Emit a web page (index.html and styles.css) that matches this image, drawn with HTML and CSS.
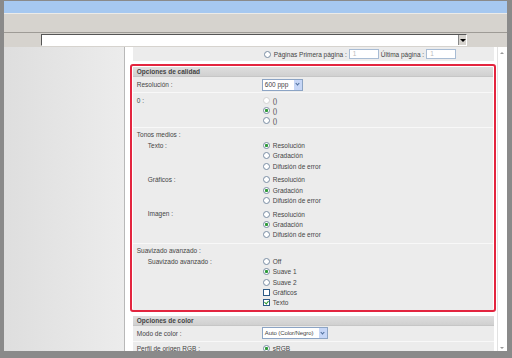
FILE: index.html
```html
<!DOCTYPE html>
<html lang="es">
<head>
	<meta charset="UTF-8">
	<title>Opciones de calidad</title>
	<link rel="stylesheet" href="styles.css">
</head>
<body>
	<div class="frame">
		<div class="title"></div>
		<div class="band"></div>
		<div class="tool">
			<div class="combo"><span class="combo-btn"></span></div>
		</div>
		<div class="main">
			<div class="side"></div>
			<div class="pane">
				<div class="pages">
					<span class="radio"></span><span>Páginas Primera página :</span><span class="num">1</span><span>Última página :</span><span class="num">1</span>
				</div>
				<div class="box">
					<div class="head">Opciones de calidad</div>
					<div class="row tall">
						<div class="lbl">Resolución :</div>
						<div class="val"><span class="select w41">600 ppp<span class="arrow"></span></span></div>
					</div>
					<div class="row list">
						<div class="lbl">0 :</div>
						<div class="val">
							<div class="opt"><span class="radio off"></span>()</div>
							<div class="opt"><span class="radio on"></span>()</div>
							<div class="opt"><span class="radio"></span>()</div>
						</div>
					</div>
					<div class="group">
						<div class="glbl">Tonos medios :</div>
						<div class="row sub">
							<div class="lbl">Texto :</div>
							<div class="val">
								<div class="opt"><span class="radio on"></span>Resolución</div>
								<div class="opt"><span class="radio"></span>Gradación</div>
								<div class="opt"><span class="radio"></span>Difusión de error</div>
							</div>
						</div>
						<div class="row sub">
							<div class="lbl">Gráficos :</div>
							<div class="val">
								<div class="opt"><span class="radio"></span>Resolución</div>
								<div class="opt"><span class="radio on"></span>Gradación</div>
								<div class="opt"><span class="radio"></span>Difusión de error</div>
							</div>
						</div>
						<div class="row sub">
							<div class="lbl">Imagen :</div>
							<div class="val">
								<div class="opt"><span class="radio"></span>Resolución</div>
								<div class="opt"><span class="radio on"></span>Gradación</div>
								<div class="opt"><span class="radio"></span>Difusión de error</div>
							</div>
						</div>
					</div>
					<div class="group last">
						<div class="glbl">Suavizado avanzado :</div>
						<div class="row sub">
							<div class="lbl">Suavizado avanzado :</div>
							<div class="val">
								<div class="opt"><span class="radio"></span>Off</div>
								<div class="opt"><span class="radio on"></span>Suave 1</div>
								<div class="opt"><span class="radio"></span>Suave 2</div>
								<div class="opt"><span class="check"></span>Gráficos</div>
								<div class="opt"><span class="check on"></span>Texto</div>
							</div>
						</div>
					</div>
				</div>
				<div class="after">
					<div class="head">Opciones de color</div>
					<div class="row tall">
						<div class="lbl">Modo de color :</div>
						<div class="val"><span class="select w66">Auto (Color/Negro)<span class="arrow"></span></span></div>
					</div>
					<div class="row last-row">
						<div class="lbl">Perfil de origen RGB :</div>
						<div class="val"><div class="opt"><span class="radio on"></span>sRGB</div></div>
					</div>
				</div>
			</div>
			<div class="scroll">
				<span class="up"></span>
				<span class="down"></span>
			</div>
		</div>
	</div>
</body>
</html>
```
FILE: styles.css
```css
body{margin: 0;background: #8a8a8a;font-family: "Liberation Sans", Arial, sans-serif;font-size: 6.5px;color: #444;}
.frame{width: 512px;height: 358px;box-sizing: border-box;border-style: solid;border-color: #8a8a8a;border-width: 1px 5px 7px 4px;background: #d6d3ce;overflow: hidden;}
.title{height: 12px;background: #a6c8f0;}
.band{height: 18px;border-top: 1px solid #ecebe8;border-bottom: 1px solid #9e9b96;background: #d6d3ce;}
.tool{height: 14px;padding-top: 1px;box-sizing: border-box;}
.combo{width: 426px;height: 12px;margin-left: 37px;box-sizing: border-box;background: #fff;border: 1px solid #fff;border-top-color: #555;border-left-color: #555;position: relative;}
.combo-btn{position: absolute;right: 0;top: 0;width: 8px;height: 10px;background: #d6d3ce;border-left: 1px solid #888;box-sizing: border-box;}
.combo-btn:after{content: "";position: absolute;left: 1px;top: 4px;border-left: 3px solid transparent;border-right: 3px solid transparent;border-top: 3px solid #000;}

.main{display: flex;height: 304px;}
.side{width: 120px;border-right: 1px solid #b8b8b8;background: linear-gradient(to right, #dedede, #ececec);}
.pane{width: 373px;background: #fff;overflow: hidden;}
.scroll{width: 9px;border-left: 1px solid #e2e2e2;background: #fff;position: relative;}
.scroll .up{position: absolute;left: 2px;top: 5px;border-left: 2px solid transparent;border-right: 2px solid transparent;border-bottom: 2px solid #999;}
.scroll .down{position: absolute;left: 2px;bottom: 2px;border-left: 2px solid transparent;border-right: 2px solid transparent;border-top: 2px solid #999;}

.pages{height: 14px;margin-left: 8px;width: 361px;background: #ececec;display: flex;align-items: center;padding-left: 130px;box-sizing: border-box;white-space: nowrap;}
.pages .radio{margin-right: 3px;}
.num{width: 30px;height: 10px;box-sizing: border-box;border: 1px solid #a8bcd4;background: #fff;color: #bbb;padding-left: 3px;line-height: 8px;margin: 0 2px 0 2px;}

.box{margin: 3px 1px 0 5px;border: 2px solid #e3253f;border-radius: 3px;padding: 1px 1px 0 1px;background: #fff;}
.head{height: 10px;line-height: 10px;padding-left: 4px;font-weight: bold;background: linear-gradient(#dedede, #d0d0d0);border-bottom: 1px solid #c6c6c6;box-sizing: border-box;}
.row{display: flex;background: #ececec;border-bottom: 1px solid #f8f8f8;}
.lbl{width: 129px;padding-left: 4px;box-sizing: border-box;flex-shrink: 0;white-space: nowrap;}
.val{flex: 1;}
.tall{height: 16px;align-items: center;box-sizing: border-box;}
.list{padding: 2px 0 1.5px 0;}
.list .lbl{line-height: 10.25px;padding-top: 1px;}
.group{background: #ececec;border-bottom: 1px solid #f8f8f8;}
.group.last{border-bottom: 0;padding-bottom: 2px;}
.glbl{height: 10.25px;line-height: 10.25px;padding: 2px 0 0 4px;}
.sub{border-bottom: 0;padding-bottom: 3.5px;}
.sub .lbl{padding-left: 15px;line-height: 10.25px;}
.group.last .sub{padding-bottom: 0;}
.opt{height: 10.25px;display: flex;align-items: center;white-space: nowrap;}
.last-row{height: 12px;padding-top: 1px;align-items: center;}

.radio{display: inline-block;width: 7px;height: 7px;box-sizing: border-box;border: 1px solid #7a8da3;border-radius: 50%;background: #fff;margin: 0 3px 0 1px;flex-shrink: 0;}
.radio.on{background: radial-gradient(circle, #2f9a3a 1.3px, #fff 1.9px);}
.radio.off{border-color: #d2d2d2;}
.check{display: inline-block;width: 7px;height: 7px;box-sizing: border-box;border: 1px solid #2c5a86;background: #fff;margin: 0 3px 0 1px;position: relative;flex-shrink: 0;}
.check.on:after{content: "";position: absolute;left: 1px;top: 0;width: 2px;height: 3px;border-right: 1px solid #2a9a2a;border-bottom: 1px solid #2a9a2a;transform: rotate(40deg);}

.select{display: inline-flex;align-items: center;height: 12px;box-sizing: border-box;border: 1px solid #8ca4c4;background: #fff;padding-left: 2px;position: relative;white-space: nowrap;overflow: hidden;}
.w41{width: 41px;}
.w66{width: 66px;font-size: 6px;letter-spacing: -0.1px;}
.arrow{position: absolute;right: 0;top: 0;width: 8px;height: 10px;background: #c6d6f6;}
.arrow:after{content: "";position: absolute;left: 2px;top: 2.5px;width: 2px;height: 2px;border-right: 1px solid #4a6a9a;border-bottom: 1px solid #4a6a9a;transform: rotate(45deg);}

.after{margin: 4px 0 0 8px;width: 361px;}
```
